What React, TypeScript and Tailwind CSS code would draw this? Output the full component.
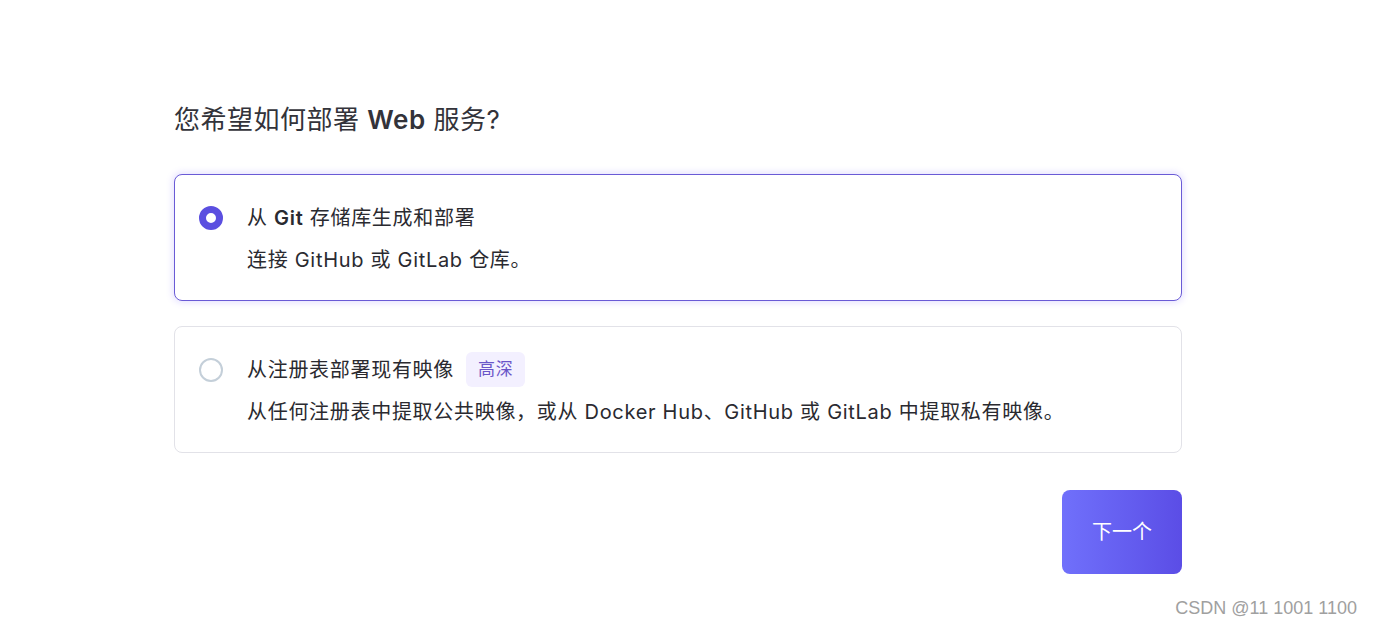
import type { ReactNode } from "react";

const font = { fontFamily: 'Inter, "Noto Sans CJK SC", sans-serif' };

interface OptionProps {
  selected?: boolean;
  title: ReactNode;
  description: string;
  badge?: string;
}

function Option({ selected, title, description, badge }: OptionProps) {
  return (
    <div
      className={
        selected
          ? "flex rounded-[8px] border border-[#6a5bd6] bg-white px-[24px] pt-[25px] pb-[25px] shadow-[0_0_6px_2px_rgba(120,100,255,0.18)]"
          : "flex rounded-[8px] border border-[#e2e2e8] bg-white px-[24px] pt-[25px] pb-[25px]"
      }
    >
      <div className="flex h-[35px] w-[24px] shrink-0 items-center">
        <span
          className={
            selected
              ? "block h-[24px] w-[24px] rounded-full border-[7px] border-[#5b4fe0] bg-white"
              : "block h-[24px] w-[24px] rounded-full border-2 border-[#c4cfd9] bg-white"
          }
        />
      </div>
      <div className="ml-[24px] flex flex-col tracking-[0.7px]">
        <div className="flex h-[35px] items-center gap-[12px] text-[20px] text-[#2a2a30]">
          <span>{title}</span>
          {badge && (
            <span className="flex h-[35px] items-center rounded-[6px] bg-[#f3f0ff] px-[12px] text-[17px] text-[#6a55c8]">
              {badge}
            </span>
          )}
        </div>
        <p className="mt-[10px] text-[20px] leading-[30px] text-[#2a2a30]">{description}</p>
      </div>
    </div>
  );
}

export default function App() {
  return (
    <div className="relative h-[624px] w-full bg-white" style={font}>
      <div className="ml-[174px] w-[1008px] pt-[102px]">
        <h1 className="text-[26px] leading-[36px] tracking-[0.5px] text-[#33333a]">
          您希望如何部署 <span className="font-semibold">Web</span> 服务?
        </h1>
        <div className="mt-[36px] flex flex-col gap-[25px]">
          <Option
            selected
            title={
              <>
                从 <span className="font-semibold">Git</span> 存储库生成和部署
              </>
            }
            description="连接 GitHub 或 GitLab 仓库。"
          />
          <Option
            title="从注册表部署现有映像"
            badge="高深"
            description="从任何注册表中提取公共映像，或从 Docker Hub、GitHub 或 GitLab 中提取私有映像。"
          />
        </div>
        <div className="mt-[37px] flex justify-end">
          <button className="h-[84px] w-[120px] rounded-[8px] bg-gradient-to-r from-[#7070fb] to-[#5b4de6] text-[20px] text-white">
            下一个
          </button>
        </div>
      </div>
      <span
        className="absolute right-[16px] top-[595px] text-[18px] text-[#a0a0a0]"
        style={{ fontFamily: '"Liberation Sans", sans-serif' }}
      >
        CSDN @11 1001 1100
      </span>
    </div>
  );
}
